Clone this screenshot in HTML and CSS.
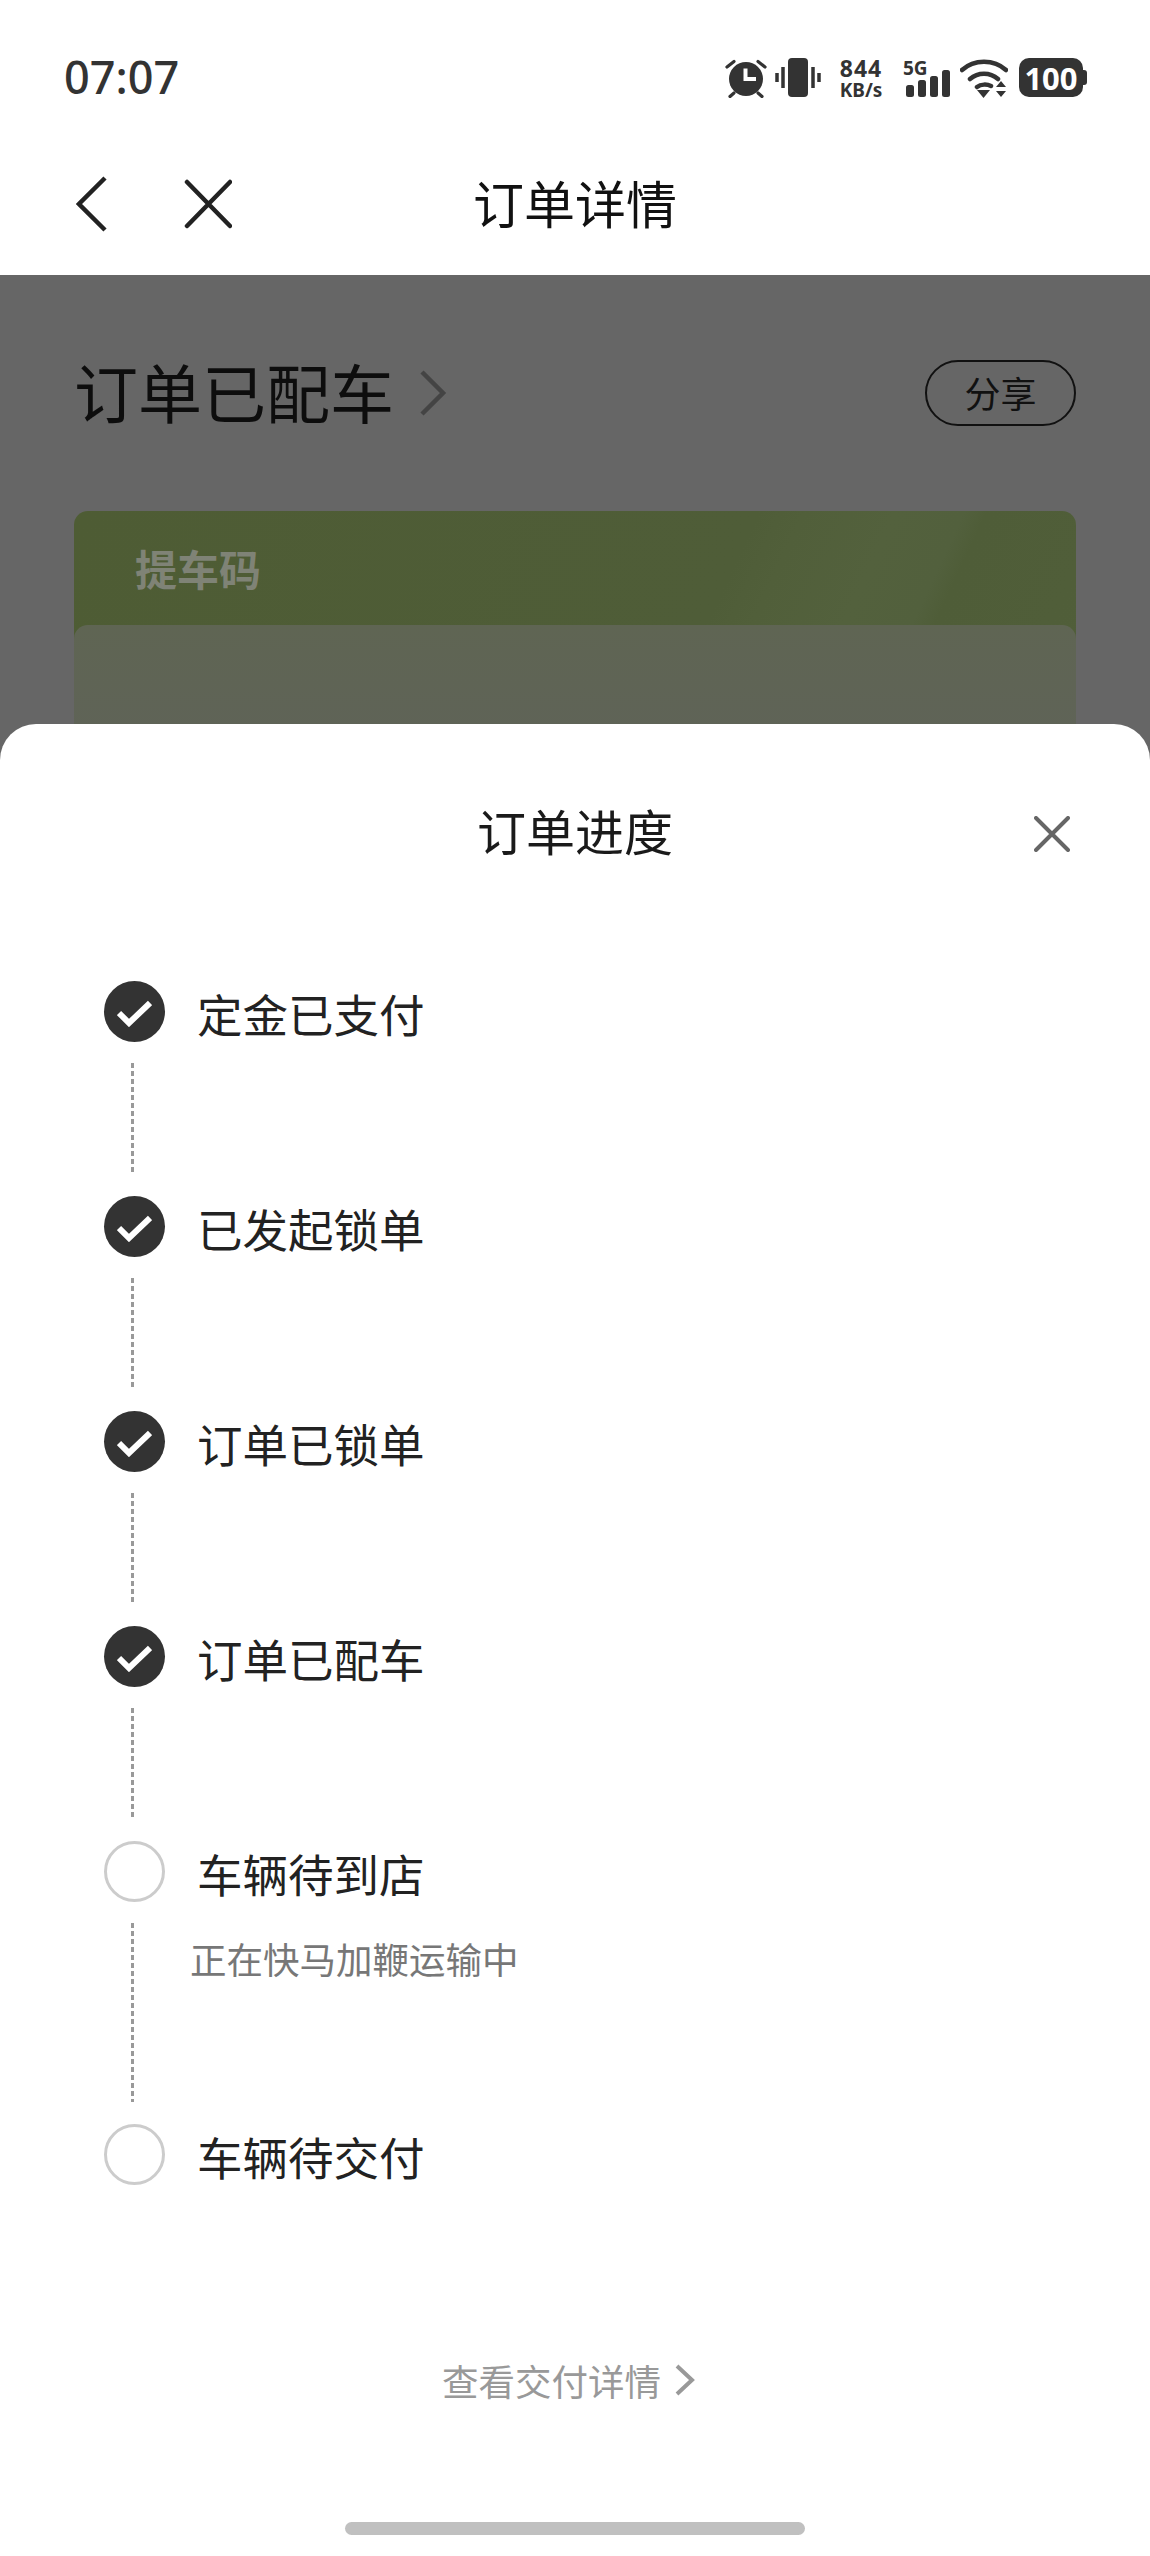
FILE: index.html
```html
<!DOCTYPE html>
<html lang="zh-CN">
  <head>
    <meta charset="UTF-8" />
    <meta name="viewport" content="width=device-width, initial-scale=1.0" />
    <title>订单进度</title>
    <link rel="stylesheet" href="styles.css">
  </head>
  <body>
    <div id="screen">
      <div class="status">
        <span class="time">07:07</span>
        <div class="status-icons">
          <svg class="ic-alarm" width="42" height="40" viewBox="0 0 42 40">
            <circle cx="21" cy="21" r="17" fill="#333" />
            <path d="M16.500 11.500H20.500V20H29V24H16.500Z" fill="#fff" transform="translate(2 -1)" />
            <path d="M2 9 9 3.500M40 9 33 3.500M9 35 5 38.500M33 35 37 38.500" stroke="#333" stroke-width="3.200" stroke-linecap="round" fill="none" />
          </svg>
          <svg class="ic-vibrate" width="46" height="40" viewBox="0 0 46 40">
            <rect x="13" y="0" width="20" height="39" rx="4" fill="#333" />
            <path d="M8 9V30M2 15V24M38 9V30M44 15V24" stroke="#333" stroke-width="3.500" fill="none" />
          </svg>
          <div class="speed"><span class="speed-num">844</span><br>KB/s</div>
          <div class="signal">
            <span class="signal-type">5G</span>
            <svg width="44" height="27" viewBox="0 0 44 27">
              <rect x="0" y="15" width="8" height="12" rx="2.500" fill="#333" />
              <rect x="12" y="10" width="8" height="17" rx="2.500" fill="#333" />
              <rect x="24" y="6" width="8" height="21" rx="2.500" fill="#333" />
              <rect x="36" y="0" width="8" height="27" rx="2.500" fill="#333" />
            </svg>
          </div>
          <svg class="ic-wifi" width="48" height="40" viewBox="0 0 48 40">
            <path d="M2 12C14 1 34 1 46 12M10 21C18 14 30 14 38 21M17 29C21 26 27 26 31 28" stroke="#333" stroke-width="4.500" stroke-linecap="round" fill="none" />
            <path d="M17 32H30L23.500 40Z" fill="#333" />
            <path d="M36 29 41 23 46 29ZM36 33H46L41 39Z" fill="#333" />
          </svg>
          <div class="battery"><span>100</span></div>
        </div>
      </div>

      <div class="nav">
        <div class="nav-left">
          <svg width="32" height="56" viewBox="0 0 32 56">
            <path d="M29 2 3 28 29 54" stroke="#222" stroke-width="4.500" fill="none" />
          </svg>
          <svg width="48" height="52" viewBox="0 0 48 52">
            <path d="M3 4 46 48M46 4 3 48" stroke="#222" stroke-width="4.500" stroke-linecap="round" fill="none" />
          </svg>
        </div>
        <div class="nav-title">订单详情</div>
      </div>

      <div class="backdrop">
        <div class="order-head">
          <div class="order-state">
            <span>订单已配车</span>
            <svg width="28" height="46" viewBox="0 0 28 46">
              <path d="M3 2 24 23 3 44" stroke="#444" stroke-width="4.500" fill="none" />
            </svg>
          </div>
          <div class="share">分享</div>
        </div>
        <div class="code-card">
          <div class="code-title">提车码</div>
          <div class="code-panel"></div>
        </div>
      </div>

      <div class="sheet">
        <div class="sheet-head">
          <div class="sheet-title">订单进度</div>
          <svg class="sheet-close" width="36" height="36" viewBox="0 0 36 36">
            <path d="M2 2 34 34M34 2 2 34" stroke="#666" stroke-width="4" stroke-linecap="round" fill="none" />
          </svg>
        </div>

        <div class="steps">
          <div class="step">
            <div class="dot done">
              <svg width="35" height="27" viewBox="0 0 35 27"><path d="M2 13 12 23 33 3" stroke="#fff" stroke-width="6" fill="none" /></svg>
            </div>
            <div class="step-name">定金已支付</div>
            <div class="step-line"></div>
          </div>
          <div class="step">
            <div class="dot done">
              <svg width="35" height="27" viewBox="0 0 35 27"><path d="M2 13 12 23 33 3" stroke="#fff" stroke-width="6" fill="none" /></svg>
            </div>
            <div class="step-name">已发起锁单</div>
            <div class="step-line"></div>
          </div>
          <div class="step">
            <div class="dot done">
              <svg width="35" height="27" viewBox="0 0 35 27"><path d="M2 13 12 23 33 3" stroke="#fff" stroke-width="6" fill="none" /></svg>
            </div>
            <div class="step-name">订单已锁单</div>
            <div class="step-line"></div>
          </div>
          <div class="step">
            <div class="dot done">
              <svg width="35" height="27" viewBox="0 0 35 27"><path d="M2 13 12 23 33 3" stroke="#fff" stroke-width="6" fill="none" /></svg>
            </div>
            <div class="step-name">订单已配车</div>
            <div class="step-line"></div>
          </div>
          <div class="step">
            <div class="dot"></div>
            <div class="step-name">车辆待到店</div>
            <div class="step-line long"></div>
            <div class="step-note">正在快马加鞭运输中</div>
          </div>
          <div class="step last">
            <div class="dot"></div>
            <div class="step-name">车辆待交付</div>
          </div>
        </div>

        <div class="delivery-link">
          <span>查看交付详情</span>
          <svg width="22" height="32" viewBox="0 0 22 32">
            <path d="M3 2 18 16 3 30" stroke="#999" stroke-width="4" fill="none" />
          </svg>
        </div>

        <div class="home-bar"></div>
      </div>
    </div>
  </body>
</html>
```

FILE: styles.css
```css
* {
  padding: 0;
  margin: 0;
  box-sizing: border-box;
}
body {
  background-color: #fff;
  font-family: "Noto Sans CJK SC", "Noto Sans", sans-serif;
  overflow: hidden;
}
svg {
  display: block;
}
#screen {
  display: flex;
  flex-direction: column;
  width: 1150px;
  height: 2556px;
}

/* status bar */
.status {
  display: flex;
  justify-content: space-between;
  height: 150px;
  padding: 58px 67px 0 64px;
}
.time {
  font-family: "Noto Sans", sans-serif;
  font-size: 45px;
  font-weight: 500;
  line-height: 38px;
  color: #333;
}
.status-icons {
  display: flex;
  align-items: flex-start;
  height: 40px;
}
.ic-vibrate {
  margin-left: 8px;
}
.speed {
  width: 48px;
  margin-left: 16px;
  font-family: "Noto Sans", sans-serif;
  font-size: 19px;
  font-weight: 700;
  line-height: 20px;
  text-align: center;
  white-space: nowrap;
  color: #333;
}
.speed-num {
  font-size: 23px;
  letter-spacing: 1px;
}
.signal {
  position: relative;
  width: 46px;
  height: 40px;
  margin-left: 18px;
  padding: 12px 0 0 3px;
}
.signal-type {
  position: absolute;
  left: 0;
  top: 0;
  font-family: "Noto Sans", sans-serif;
  font-size: 19px;
  font-weight: 700;
  line-height: 20px;
  color: #333;
}
.ic-wifi {
  margin-left: 11px;
}
.battery {
  position: relative;
  display: flex;
  justify-content: center;
  align-items: center;
  width: 64px;
  height: 39px;
  margin-left: 11px;
  border-radius: 10px;
  background-color: #333;
  font-family: "Noto Sans", sans-serif;
  font-size: 31px;
  font-weight: 700;
  color: #fff;
}
.battery::after {
  content: "";
  position: absolute;
  right: -4px;
  top: 12px;
  width: 4px;
  height: 15px;
  border-radius: 0 3px 3px 0;
  background-color: #333;
}

/* nav */
.nav {
  display: grid;
  grid-template-columns: 1fr auto 1fr;
  align-items: center;
  height: 125px;
  padding-bottom: 17px;
}
.nav-left {
  display: flex;
  align-items: center;
  gap: 76px;
  padding-left: 76px;
}
.nav-title {
  margin-bottom: 4px;
  font-size: 51px;
  line-height: 67px;
  color: #111;
}

/* dimmed page behind the sheet */
.backdrop {
  height: 485px;
  padding: 85px 74px 0;
  background-color: #666;
  overflow: hidden;
}
.order-head {
  display: flex;
  justify-content: space-between;
  align-items: center;
  height: 66px;
  margin-bottom: 85px;
}
.order-state {
  display: flex;
  align-items: center;
  gap: 25px;
  font-size: 64px;
  line-height: 60px;
  color: #0d0d0d;
}
.order-state span {
  margin-bottom: 6px;
}
.share {
  display: flex;
  justify-content: center;
  align-items: center;
  width: 151px;
  height: 66px;
  padding-bottom: 3px;
  border: 2px solid #111;
  border-radius: 33px;
  font-size: 36px;
  color: #111;
}
.code-card {
  height: 300px;
  border-radius: 14px 14px 0 0;
  background: linear-gradient(115deg, #4e5c34 0%, #4f5d38 60%, #515f3a 64%, #53613d 72%, #52603d 78%, #4f5d38 80%, #515f3a 100%);
}
.code-title {
  height: 114px;
  padding: 30px 0 0 61px;
  font-size: 42px;
  font-weight: 700;
  line-height: 54px;
  color: #7f8376;
}
.code-panel {
  height: 186px;
  border-radius: 14px 14px 0 0;
  background: linear-gradient(180deg, #5f6553, #5f625a);
}

/* progress sheet */
.sheet {
  position: relative;
  flex: 1;
  display: flex;
  flex-direction: column;
  margin-top: -36px;
  border-radius: 36px 36px 0 0;
  background-color: #fff;
}
.sheet-head {
  display: grid;
  grid-template-columns: 1fr auto 1fr;
  align-items: center;
  height: 58px;
  margin: 80px 0 119px;
}
.sheet-title {
  grid-column: 2;
  margin-top: -6px;
  font-size: 49px;
  line-height: 58px;
  color: #1a1a1a;
}
.sheet-close {
  justify-self: end;
  margin: 2px 80px 0 0;
}
.steps {
  padding-left: 104px;
}
.step {
  display: grid;
  grid-template-columns: 61px 1fr;
  column-gap: 28px;
  margin-bottom: 22px;
}
.step.last {
  margin-bottom: 0;
}
.dot {
  display: flex;
  justify-content: center;
  align-items: center;
  width: 61px;
  height: 61px;
  border: 3px solid #ccc;
  border-radius: 50%;
}
.dot.done {
  border: 0;
  background-color: #333;
}
.dot svg {
  margin-top: 4px;
}
.step-name {
  height: 61px;
  padding: 3px 0 0 4px;
  font-size: 45.500px;
  line-height: 58px;
  color: #222;
}
.step-line {
  width: 3px;
  height: 111px;
  margin: 21px 0 0 27px;
  background: repeating-linear-gradient(180deg, #999 0, #999 5px, transparent 5px, transparent 8px);
}
.step-line.long {
  height: 179px;
}
.step-note {
  margin: 32px 0 0 -3px;
  font-size: 36.500px;
  line-height: 50px;
  color: #777;
}
.delivery-link {
  display: flex;
  justify-content: center;
  align-items: center;
  gap: 13px;
  height: 44px;
  margin: 173px 12px 0 0;
  font-size: 36.500px;
  color: #999;
}
.home-bar {
  width: 460px;
  height: 13px;
  margin: 120px auto 0;
  border-radius: 7px;
  background-color: #c0c0c0;
}
```
